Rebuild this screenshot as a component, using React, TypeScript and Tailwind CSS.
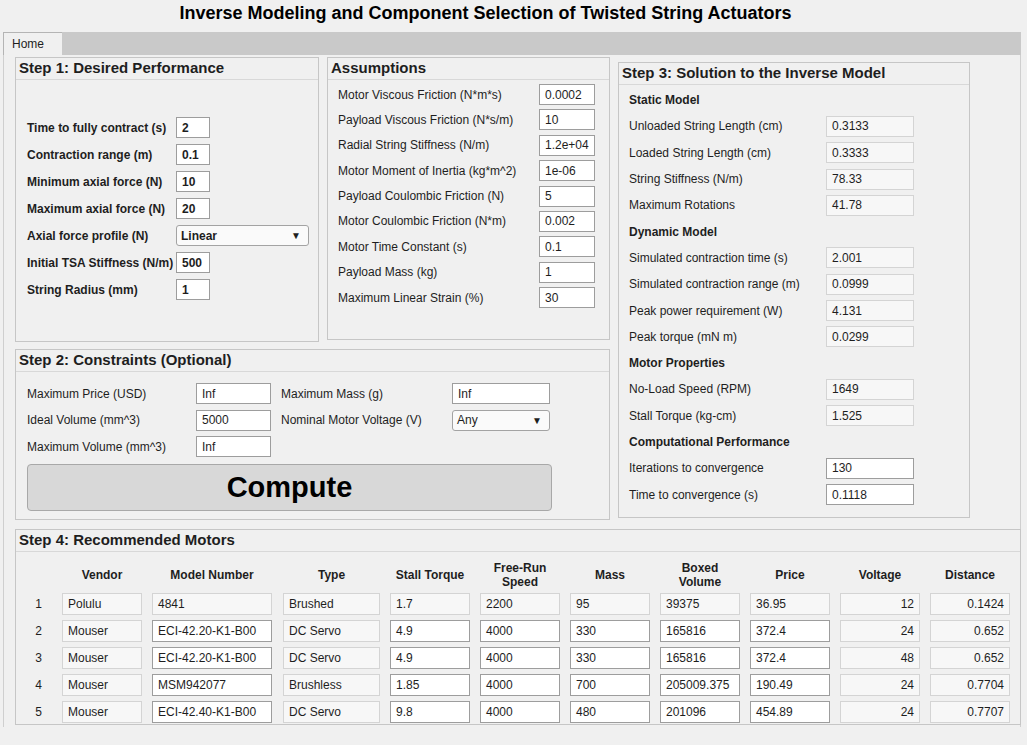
import React from 'react';

const Field = ({ value, w, editable = false, bold = false, right = false, h = 'h-[21px]' }: { value: string, w: string, editable?: boolean, bold?: boolean, right?: boolean, h?: string }) => {
    return (
        <div className={`${w} ${h} shrink-0 flex items-center border px-[5px] text-[12px] ${editable ? 'bg-white border-[#9d9d9d]' : 'bg-[#f7f7f7] border-[#d4d4d4]'} ${bold ? 'font-bold' : ''} ${right ? 'justify-end' : ''}`}>
            {value}
        </div>
    );
};

const Dropdown = ({ value, w, bold = false }: { value: string, w: string, bold?: boolean }) => {
    return (
        <div className={`${w} h-[21px] shrink-0 flex items-center justify-between rounded-[3px] border border-[#a3a3a3] bg-[#fafafa] pl-[4px] pr-[7px] text-[12px] ${bold ? 'font-bold' : ''}`}>
            <span>{value}</span>
            <span className="text-[10px]">▼</span>
        </div>
    );
};

const Panel = ({ title, className, children }: { title: string, className: string, children: React.ReactNode }) => {
    return (
        <div className={`flex flex-col shrink-0 border border-[#c6c6c6] bg-[#f0f0f0] ${className}`}>
            <div className="h-[22px] shrink-0 border-b border-[#d8d8d8] px-[3px] text-[15px] font-bold leading-[20px]">{title}</div>
            {children}
        </div>
    );
};

const step1 = [
    ['Time to fully contract (s)', '2'],
    ['Contraction range (m)', '0.1'],
    ['Minimum axial force (N)', '10'],
    ['Maximum axial force (N)', '20'],
    ['Axial force profile (N)', 'Linear'],
    ['Initial TSA Stiffness (N/m)', '500'],
    ['String Radius (mm)', '1'],
];

const assumptions = [
    ['Motor Viscous Friction (N*m*s)', '0.0002'],
    ['Payload Viscous Friction (N*s/m)', '10'],
    ['Radial String Stiffness (N/m)', '1.2e+04'],
    ['Motor Moment of Inertia (kg*m^2)', '1e-06'],
    ['Payload Coulombic Friction (N)', '5'],
    ['Motor Coulombic Friction (N*m)', '0.002'],
    ['Motor Time Constant (s)', '0.1'],
    ['Payload Mass (kg)', '1'],
    ['Maximum Linear Strain (%)', '30'],
];

// value null = section heading, third item = editable field
const step3: [string, string | null, boolean?][] = [
    ['Static Model', null],
    ['Unloaded String Length (cm)', '0.3133'],
    ['Loaded String Length (cm)', '0.3333'],
    ['String Stiffness (N/m)', '78.33'],
    ['Maximum Rotations', '41.78'],
    ['Dynamic Model', null],
    ['Simulated contraction time (s)', '2.001'],
    ['Simulated contraction range (m)', '0.0999'],
    ['Peak power requirement (W)', '4.131'],
    ['Peak torque (mN m)', '0.0299'],
    ['Motor Properties', null],
    ['No-Load Speed (RPM)', '1649'],
    ['Stall Torque (kg-cm)', '1.525'],
    ['Computational Performance', null],
    ['Iterations to convergence', '130', true],
    ['Time to convergence (s)', '0.1118', true],
];

const columns = [
    { title: 'Vendor', w: 'w-[80px]' },
    { title: 'Model Number', w: 'w-[120px]' },
    { title: 'Type', w: 'w-[97px] ml-[1px]' },
    { title: 'Stall Torque', w: 'w-[80px]' },
    { title: 'Free-Run\nSpeed', w: 'w-[80px]' },
    { title: 'Mass', w: 'w-[80px]' },
    { title: 'Boxed\nVolume', w: 'w-[80px]' },
    { title: 'Price', w: 'w-[80px]' },
    { title: 'Voltage', w: 'w-[80px]' },
    { title: 'Distance', w: 'w-[80px]' },
];

const motors = [
    ['Polulu', '4841', 'Brushed', '1.7', '2200', '95', '39375', '36.95', '12', '0.1424'],
    ['Mouser', 'ECI-42.20-K1-B00', 'DC Servo', '4.9', '4000', '330', '165816', '372.4', '24', '0.652'],
    ['Mouser', 'ECI-42.20-K1-B00', 'DC Servo', '4.9', '4000', '330', '165816', '372.4', '48', '0.652'],
    ['Mouser', 'MSM942077', 'Brushless', '1.85', '4000', '700', '205009.375', '190.49', '24', '0.7704'],
    ['Mouser', 'ECI-42.40-K1-B00', 'DC Servo', '9.8', '4000', '480', '201096', '454.89', '24', '0.7707'],
];

const editableCols = [1, 3, 4, 5, 6, 7];

export default function App() {
    return (
        <div className="w-[1027px] h-[745px] overflow-hidden bg-[#f0f0f0] text-[#1e1e1e] font-['Liberation_Sans',Arial,sans-serif]">
            {/* Title */}
            <div className="w-[971px] h-[32px] pt-[3px] text-center text-[18px] font-bold leading-[21px] text-black">
                Inverse Modeling and Component Selection of Twisted String Actuators
            </div>

            {/* Tabs */}
            <div className="ml-[3px] w-[1018px]">
                <div className="h-[23px] bg-[#c9c9c9] flex">
                    <div className="w-[59px] h-full bg-[#f0f0f0] border-l border-t border-[#b4b4b4] pl-[8px] text-[12px] leading-[22px]">Home</div>
                </div>

                <div className="h-[672px] border-l border-r border-[#cfcfcf] pl-[11px] pt-[2px]">
                    <div className="flex">
                        {/* Left column */}
                        <div className="w-[595px] flex flex-col">
                            <div className="flex gap-[8px]">
                                <Panel title="Step 1: Desired Performance" className="w-[304px] h-[285px]">
                                    <div className="flex flex-col gap-[6px] pl-[11px] pt-[37px]">
                                        {step1.map(([label, value]) => (
                                            <div key={label} className="flex items-center h-[21px]">
                                                <div className="w-[149px] shrink-0 text-[12px] font-bold whitespace-nowrap">{label}</div>
                                                {value === 'Linear'
                                                    ? <Dropdown value={value} w="w-[133px]" bold />
                                                    : <Field value={value} w="w-[34px]" editable bold />}
                                            </div>
                                        ))}
                                    </div>
                                </Panel>

                                <Panel title="Assumptions" className="w-[283px] h-[283px]">
                                    <div className="flex flex-col gap-[4.4px] pl-[10px] pt-[4px]">
                                        {assumptions.map(([label, value]) => (
                                            <div key={label} className="flex items-center h-[21px]">
                                                <div className="w-[201px] shrink-0 text-[12px] whitespace-nowrap">{label}</div>
                                                <Field value={value} w="w-[56px]" editable />
                                            </div>
                                        ))}
                                    </div>
                                </Panel>
                            </div>

                            <Panel title="Step 2: Constraints (Optional)" className="w-[595px] h-[171px] mt-[7px]">
                                <div className="pl-[11px] pt-[11px]">
                                    <div className="grid grid-cols-[169px_75px_10px_171px_98px] gap-y-[5.5px] items-center text-[12px]">
                                        <div>Maximum Price (USD)</div>
                                        <Field value="Inf" w="w-[75px]" editable />
                                        <div />
                                        <div>Maximum Mass (g)</div>
                                        <Field value="Inf" w="w-[98px]" editable />

                                        <div>Ideal Volume (mm^3)</div>
                                        <Field value="5000" w="w-[75px]" editable />
                                        <div />
                                        <div>Nominal Motor Voltage (V)</div>
                                        <Dropdown value="Any" w="w-[98px]" />

                                        <div>Maximum Volume (mm^3)</div>
                                        <Field value="Inf" w="w-[75px]" editable />
                                    </div>
                                    <button className="mt-[7px] w-[525px] h-[47px] rounded-[4px] border border-[#a8a8a8] bg-[#d8d8d8] text-[29px] font-bold text-black">
                                        Compute
                                    </button>
                                </div>
                            </Panel>
                        </div>

                        {/* Right column */}
                        <Panel title="Step 3: Solution to the Inverse Model" className="w-[352px] h-[456px] ml-[8px] mt-[5px]">
                            <div className="flex flex-col pl-[10px] pt-[2px]">
                                {step3.map(([label, value, editable]) => (
                                    <div key={label} className="flex items-center h-[26.3px]">
                                        {value === null
                                            ? <div className="text-[12px] font-bold">{label}</div>
                                            : <>
                                                <div className="w-[197px] shrink-0 text-[12px]">{label}</div>
                                                <Field value={value} w="w-[88px]" editable={!!editable} />
                                            </>}
                                    </div>
                                ))}
                            </div>
                        </Panel>
                    </div>

                    {/* Step 4 */}
                    <Panel title="Step 4: Recommended Motors" className="w-[1006px] h-[196px] mt-[9px]">
                        <div className="pt-[5px]">
                            <div className="flex h-[35px] items-center gap-[10px]">
                                <div className="w-[36px] shrink-0" />
                                {columns.map((c) => (
                                    <div key={c.title} className={`${c.w} shrink-0 text-center text-[12px] font-bold leading-[14px] whitespace-pre-line`}>{c.title}</div>
                                ))}
                            </div>
                            <div className="flex flex-col gap-[5px] mt-[1px]">
                                {motors.map((row, i) => (
                                    <div key={i} className="flex items-center gap-[10px]">
                                        <div className="w-[36px] shrink-0 text-right pr-[10px] text-[12px]">{i + 1}</div>
                                        {row.map((v, j) => (
                                            <Field
                                                key={j}
                                                value={v}
                                                w={columns[j].w}
                                                h="h-[22px]"
                                                editable={i > 0 && editableCols.includes(j)}
                                                right={j >= 8}
                                            />
                                        ))}
                                    </div>
                                ))}
                            </div>
                        </div>
                    </Panel>
                </div>
            </div>
        </div>
    );
}
